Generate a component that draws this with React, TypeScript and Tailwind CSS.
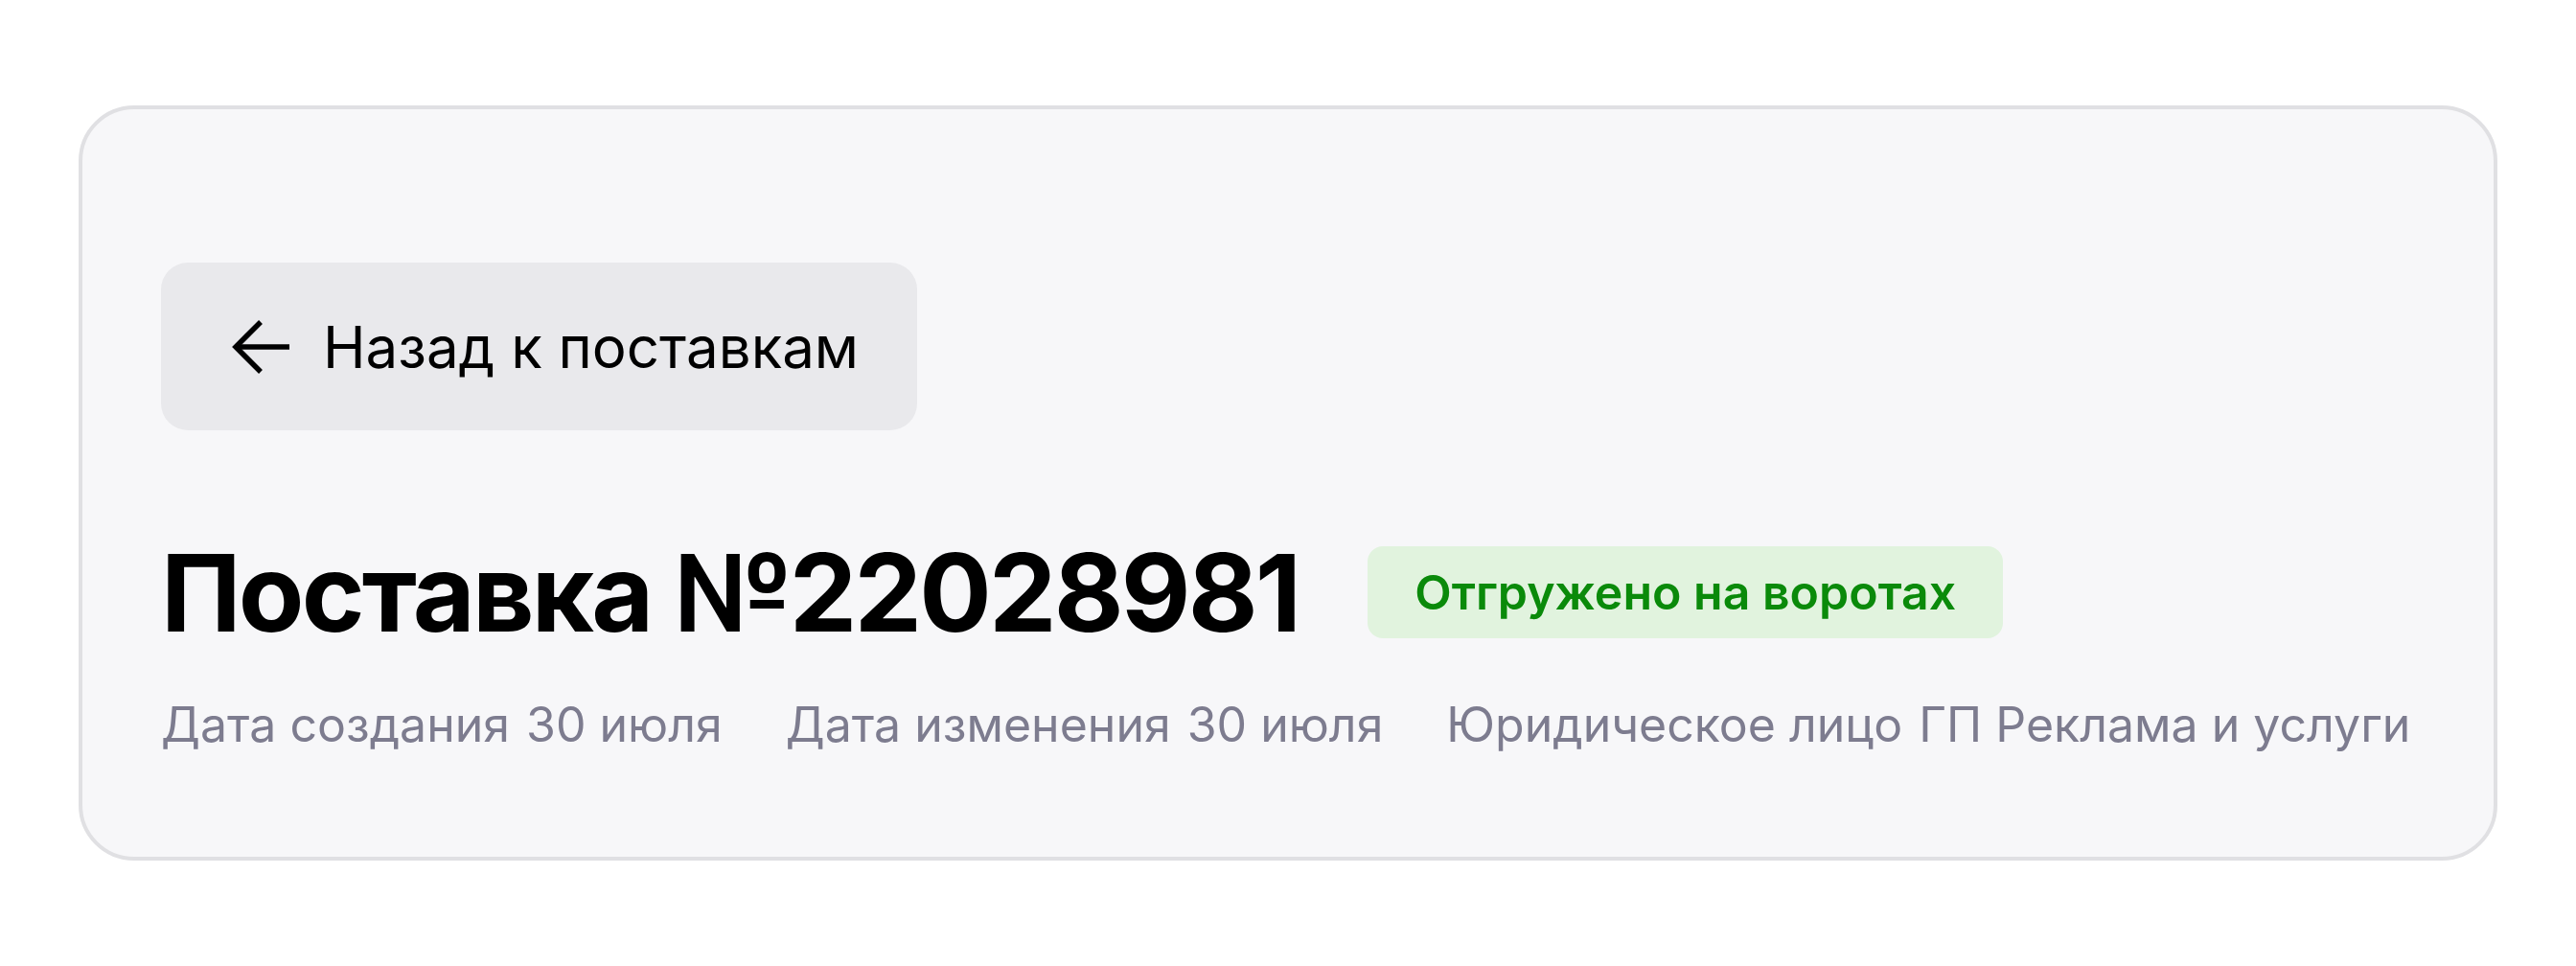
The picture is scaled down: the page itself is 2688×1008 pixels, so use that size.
import React from 'react';

const meta = [
  { label: 'Дата создания', value: '30 июля' },
  { label: 'Дата изменения', value: '30 июля' },
  { label: 'Юридическое лицо', value: 'ГП Реклама и услуги' },
];

function ArrowLeft() {
  return (
    <svg width="62" height="56" viewBox="0 0 62 56" fill="none" stroke="#000" strokeWidth="5.5" strokeLinecap="butt" strokeLinejoin="miter">
      <path d="M61 28H5" />
      <path d="M31 2L5 28L31 54" />
    </svg>
  );
}

export default function App() {
  return (
    <div className="min-h-screen bg-white pl-[82px] pr-[82px] pt-[110px]" style={{ fontFamily: 'Inter, "Noto Sans", sans-serif' }}>
      <div className="w-[2524px] h-[788px] rounded-[58px] border-[4px] border-[#e0e0e3] bg-[#f7f7f9] pl-[82px] pt-[160px]">
        <button className="flex items-center h-[175px] w-[789px] rounded-[28px] bg-[#e9e9ec] pl-[73px] gap-[34px] text-[60px] text-black">
          <ArrowLeft />
          <span className="leading-none">Назад к поставкам</span>
        </button>

        <div className="flex items-center mt-[113px] gap-[72px]">
          <h1 className="text-[112px] font-bold leading-none text-black tracking-[-2.8px]">Поставка №22028981</h1>
          <span className="flex items-center h-[96px] rounded-[16px] bg-[#e1f3de] px-[49px] text-[50px] font-semibold text-[#0a8a0a]">
            Отгружено на воротах
          </span>
        </div>

        <div className="flex items-center gap-[66px] mt-[45px] text-[50px] text-[#7d7c8f]">
          {meta.map((m) => (
            <div key={m.label} className="flex gap-[17px]">
              <span>{m.label}</span>
              <span>{m.value}</span>
            </div>
          ))}
        </div>
      </div>
    </div>
  );
}
